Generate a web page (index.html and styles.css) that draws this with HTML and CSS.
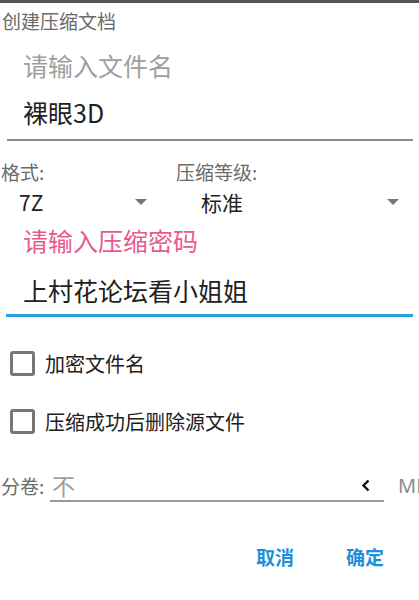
FILE: index.html
```html
<!DOCTYPE html>
<html lang="zh-CN">

<head>
    <meta charset="UTF-8">
    <meta name="viewport" content="width=device-width, initial-scale=1.0">
    <title>创建压缩文档</title>
    <link rel="stylesheet" href="styles.css">
</head>

<body>
    <div class="top-bar"></div>
    <div class="dialog">
        <div class="dialog-title">创建压缩文档</div>

        <div class="name-field">
            <div class="field-hint">请输入文件名</div>
            <div class="field-value">裸眼3D</div>
        </div>

        <div class="spinner-grid">
            <div class="spinner-label">格式:</div>
            <div class="spinner-label second">压缩等级:</div>
            <div class="spinner first-spinner">
                <span>7Z</span>
                <span class="spinner-arrow"></span>
            </div>
            <div class="spinner second-spinner">
                <span>标准</span>
                <span class="spinner-arrow"></span>
            </div>
        </div>

        <div class="password-field">
            <div class="field-hint active">请输入压缩密码</div>
            <div class="field-value">上村花论坛看小姐姐</div>
        </div>

        <div class="check-list">
            <label class="check-row"><span class="check-box"></span>加密文件名</label>
            <label class="check-row"><span class="check-box"></span>压缩成功后删除源文件</label>
        </div>

        <div class="split-row">
            <span class="split-label">分卷:</span>
            <div class="split-input">
                <span class="split-hint">不</span>
                <svg class="chevron" width="10" height="13" viewBox="0 0 10 13">
                    <path d="M7.5 1.5 L2.5 6.5 L7.5 11.5" fill="none" stroke="#111" stroke-width="2.4" />
                </svg>
            </div>
            <span class="split-unit">MB</span>
        </div>

        <div class="dialog-actions">
            <button class="action-button">取消</button>
            <button class="action-button">确定</button>
        </div>
    </div>
</body>

</html>
```

FILE: styles.css
```css
body {
    margin: 0;
    background-color: #ffffff;
    font-family: "Noto Sans CJK SC", "Noto Sans", sans-serif;
    color: #212121;
    overflow: hidden;
}

.top-bar {
    height: 3px;
    background-color: #555555;
}

.dialog {
    width: 419px;
    overflow: hidden;
}

.dialog-title {
    height: 36px;
    line-height: 36px;
    padding-left: 2px;
    font-size: 19px;
    color: #6b6b6b;
    white-space: nowrap;
}

.name-field {
    margin: 0 6px 0 7px;
    padding-left: 16px;
    border-bottom: 2px solid #8a8a8a;
}

.field-hint {
    height: 52px;
    line-height: 52px;
    font-size: 25px;
    color: #9e9e9e;
}

.field-value {
    height: 42px;
    line-height: 42px;
    padding-bottom: 6px;
    font-size: 25px;
    color: #212121;
}

.spinner-grid {
    display: grid;
    grid-template-columns: 176px 1fr;
    margin-top: 19px;
}

.spinner-label {
    height: 24px;
    line-height: 24px;
    padding-left: 1px;
    font-size: 19px;
    color: #6b6b6b;
    white-space: nowrap;
}

.spinner-label.second {
    padding-left: 0;
}

.spinner {
    display: flex;
    align-items: center;
    justify-content: space-between;
    height: 36px;
    font-size: 21px;
    color: #212121;
}

.first-spinner {
    padding-left: 19px;
    padding-right: 29px;
}

.second-spinner {
    padding-left: 25px;
    padding-right: 20px;
}

.spinner-arrow {
    width: 0;
    height: 0;
    border-left: 6px solid transparent;
    border-right: 6px solid transparent;
    border-top: 6px solid #777777;
}

.password-field {
    margin: 0 6px;
    padding-left: 17px;
    border-bottom: 3px solid #2aa0dc;
}

.field-hint.active {
    height: 40px;
    line-height: 40px;
    color: #e85a8c;
}

.password-field .field-value {
    height: 48px;
    line-height: 48px;
    padding-top: 6px;
    padding-bottom: 0;
}

.check-list {
    margin-top: 17px;
}

.check-row {
    display: flex;
    align-items: center;
    height: 58px;
    padding-left: 10px;
    font-size: 20px;
    color: #212121;
}

.check-box {
    box-sizing: border-box;
    width: 25px;
    height: 25px;
    margin-right: 10px;
    border: 3px solid #777777;
    border-radius: 3px;
}

.split-row {
    display: flex;
    align-items: flex-end;
    margin-top: 20px;
}

.split-label {
    flex-shrink: 0;
    width: 49px;
    height: 32px;
    line-height: 32px;
    padding-left: 1px;
    font-size: 19px;
    color: #6b6b6b;
    white-space: nowrap;
}

.split-input {
    flex-shrink: 0;
    display: flex;
    align-items: center;
    justify-content: space-between;
    width: 334px;
    height: 32px;
    padding-left: 2px;
    box-sizing: border-box;
    padding-right: 13px;
    border-bottom: 2px solid #999999;
}

.split-hint {
    font-size: 23px;
    color: #9e9e9e;
}

.split-unit {
    flex-shrink: 0;
    height: 32px;
    line-height: 32px;
    margin-left: 14px;
    font-family: "Noto Sans", sans-serif;
    font-size: 20px;
    color: #8a8a8a;
    white-space: nowrap;
}

.dialog-actions {
    display: flex;
    justify-content: flex-end;
    gap: 52px;
    margin-top: 26px;
    padding-right: 35px;
}

.action-button {
    height: 56px;
    padding: 0;
    background: none;
    border: none;
    font-family: "Noto Sans CJK SC", sans-serif;
    font-size: 19px;
    font-weight: bold;
    color: #1e90d6;
    cursor: pointer;
}
```
